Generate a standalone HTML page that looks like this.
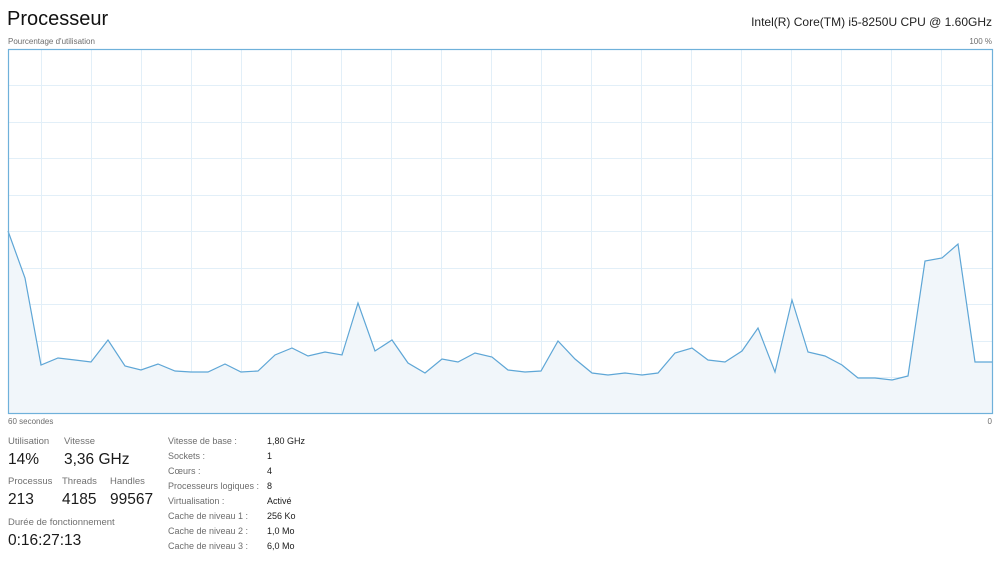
<!DOCTYPE html>
<html><head><meta charset="utf-8"><style>
body{margin:0;width:1000px;height:569px;background:#fff;font-family:"Liberation Sans",sans-serif;position:relative;overflow:hidden}
.a{position:absolute;white-space:nowrap;line-height:1}
.l{color:#6d6d6d;font-size:9.5px}
.s{color:#707070;font-size:9.5px}
.v{color:#1a1a1a;font-size:15.5px}
.d{color:#1a1a1a;font-size:9.5px}
</style></head><body>
<div class="a" style="left:7px;top:9px;font-size:20px;color:#111">Processeur</div>
<div class="a" style="right:8px;top:16px;font-size:12px;color:#222">Intel(R) Core(TM) i5-8250U CPU @ 1.60GHz</div>
<div class="a l" style="left:8px;top:38px;font-size:8px">Pourcentage d'utilisation</div>
<div class="a l" style="right:8px;top:38px;font-size:8px">100 %</div>
<svg class="a" style="left:0;top:0" width="1000" height="569">
<g stroke="#e2eff8" stroke-width="1">
<line x1="41.5" y1="49" x2="41.5" y2="413"/><line x1="91.5" y1="49" x2="91.5" y2="413"/><line x1="141.5" y1="49" x2="141.5" y2="413"/><line x1="191.5" y1="49" x2="191.5" y2="413"/><line x1="241.5" y1="49" x2="241.5" y2="413"/><line x1="291.5" y1="49" x2="291.5" y2="413"/><line x1="341.5" y1="49" x2="341.5" y2="413"/><line x1="391.5" y1="49" x2="391.5" y2="413"/><line x1="441.5" y1="49" x2="441.5" y2="413"/><line x1="491.5" y1="49" x2="491.5" y2="413"/><line x1="541.5" y1="49" x2="541.5" y2="413"/><line x1="591.5" y1="49" x2="591.5" y2="413"/><line x1="641.5" y1="49" x2="641.5" y2="413"/><line x1="691.5" y1="49" x2="691.5" y2="413"/><line x1="741.5" y1="49" x2="741.5" y2="413"/><line x1="791.5" y1="49" x2="791.5" y2="413"/><line x1="841.5" y1="49" x2="841.5" y2="413"/><line x1="891.5" y1="49" x2="891.5" y2="413"/><line x1="941.5" y1="49" x2="941.5" y2="413"/>
<line x1="8" y1="85.5" x2="992" y2="85.5"/><line x1="8" y1="122.5" x2="992" y2="122.5"/><line x1="8" y1="158.5" x2="992" y2="158.5"/><line x1="8" y1="195.5" x2="992" y2="195.5"/><line x1="8" y1="231.5" x2="992" y2="231.5"/><line x1="8" y1="268.5" x2="992" y2="268.5"/><line x1="8" y1="304.5" x2="992" y2="304.5"/><line x1="8" y1="341.5" x2="992" y2="341.5"/><line x1="8" y1="377.5" x2="992" y2="377.5"/>
</g>
<path d="M8,231 L25,278 L41,365 L58,358 L75,360 L91,362 L108,340 L125,366 L141,370 L158,364 L175,371 L191,372 L208,372 L225,364 L241,372 L258,371 L275,355 L292,348 L308,356 L325,352 L342,355 L358,303 L375,351 L392,340 L408,363 L425,373 L442,359 L458,362 L475,353 L492,357 L508,370 L525,372 L541,371 L558,341 L575,359 L592,373 L608,375 L625,373 L642,375 L658,373 L675,353 L692,348 L708,360 L725,362 L742,351 L758,328 L775,372 L792,300 L808,352 L825,356 L842,365 L858,378 L875,378 L892,380 L908,376 L925,261 L942,258 L958,244 L975,362 L992,362 L992,413 L8,413 Z" fill="#f1f6fa" stroke="none"/>
<path d="M8,231 L25,278 L41,365 L58,358 L75,360 L91,362 L108,340 L125,366 L141,370 L158,364 L175,371 L191,372 L208,372 L225,364 L241,372 L258,371 L275,355 L292,348 L308,356 L325,352 L342,355 L358,303 L375,351 L392,340 L408,363 L425,373 L442,359 L458,362 L475,353 L492,357 L508,370 L525,372 L541,371 L558,341 L575,359 L592,373 L608,375 L625,373 L642,375 L658,373 L675,353 L692,348 L708,360 L725,362 L742,351 L758,328 L775,372 L792,300 L808,352 L825,356 L842,365 L858,378 L875,378 L892,380 L908,376 L925,261 L942,258 L958,244 L975,362 L992,362" fill="none" stroke="#5ea6d6" stroke-width="1.2"/>
<rect x="8.5" y="49.5" width="984" height="364" fill="none" stroke="#6fb1da" stroke-width="1.2"/>
</svg>
<div class="a l" style="left:8px;top:418px;font-size:8px">60 secondes</div>
<div class="a l" style="right:8px;top:418px;font-size:8px">0</div>

<div class="a s" style="left:8px;top:437px">Utilisation</div>
<div class="a s" style="left:64px;top:437px">Vitesse</div>
<div class="a v" style="left:8px;top:452px">14%</div>
<div class="a v" style="left:64px;top:452px">3,36 GHz</div>
<div class="a s" style="left:8px;top:477px">Processus</div>
<div class="a s" style="left:62px;top:477px">Threads</div>
<div class="a s" style="left:110px;top:477px">Handles</div>
<div class="a v" style="left:8px;top:492px">213</div>
<div class="a v" style="left:62px;top:492px">4185</div>
<div class="a v" style="left:110px;top:492px">99567</div>
<div class="a s" style="left:8px;top:518px">Durée de fonctionnement</div>
<div class="a v" style="left:8px;top:533px">0:16:27:13</div>

<div class="a l" style="left:168px;top:437px;font-size:9px">Vitesse de base :</div><div class="a d" style="left:267px;top:437px;font-size:9px">1,80 GHz</div>
<div class="a l" style="left:168px;top:452px;font-size:9px">Sockets :</div><div class="a d" style="left:267px;top:452px;font-size:9px">1</div>
<div class="a l" style="left:168px;top:467px;font-size:9px">Cœurs :</div><div class="a d" style="left:267px;top:467px;font-size:9px">4</div>
<div class="a l" style="left:168px;top:482px;font-size:9px">Processeurs logiques :</div><div class="a d" style="left:267px;top:482px;font-size:9px">8</div>
<div class="a l" style="left:168px;top:497px;font-size:9px">Virtualisation :</div><div class="a d" style="left:267px;top:497px;font-size:9px">Activé</div>
<div class="a l" style="left:168px;top:512px;font-size:9px">Cache de niveau 1 :</div><div class="a d" style="left:267px;top:512px;font-size:9px">256 Ko</div>
<div class="a l" style="left:168px;top:527px;font-size:9px">Cache de niveau 2 :</div><div class="a d" style="left:267px;top:527px;font-size:9px">1,0 Mo</div>
<div class="a l" style="left:168px;top:542px;font-size:9px">Cache de niveau 3 :</div><div class="a d" style="left:267px;top:542px;font-size:9px">6,0 Mo</div>
</body></html>
